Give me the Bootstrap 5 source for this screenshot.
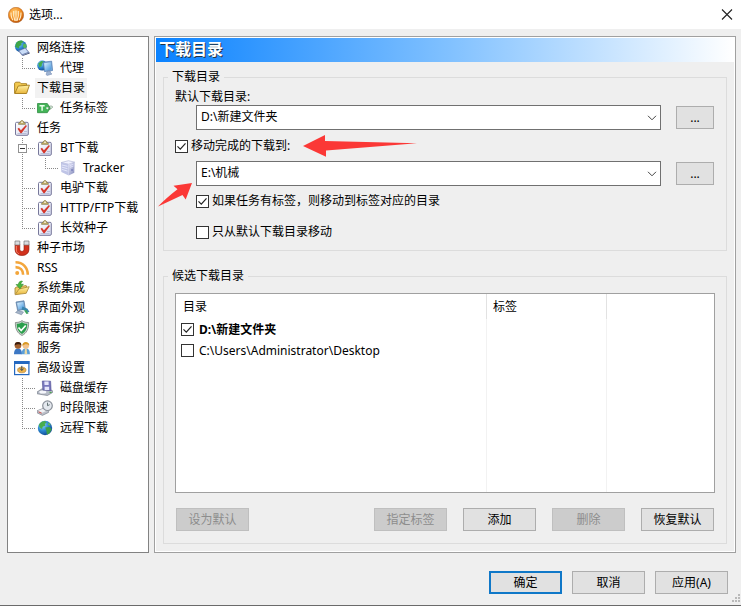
<!DOCTYPE html>
<html lang="zh-CN">
<head>
<meta charset="utf-8">
<meta name="viewport" content="width=device-width, initial-scale=1">
<title>选项...</title>
<link href="https://cdn.jsdelivr.net/npm/bootstrap@5.3.0/dist/css/bootstrap.min.css" rel="stylesheet">
<style>
  body {
    font: 12px/16px "Noto Sans", "Noto Sans CJK SC", sans-serif;
    color: #000;
    background: #efefef;
  }
  .dialog { border-bottom: 1px solid #6a6a6a; }
  .titlebar { height: 29px; padding: 0 8px; gap: 5px; }
  .titlebar h1 { font-size: 12px; line-height: 16px; font-weight: 400; }
  .close-btn { width: 12px; height: 12px; }
  .workspace { padding: 7px 5px 0 7px; gap: 5px; }

  /* Category tree */
  .sidebar { flex: 0 0 142px; border: 1px solid #828282; padding: 1px 0 0 6px; }
  .tree-row { height: 20px; }
  .tree-row svg.ico { width: 16px; height: 16px; }
  .tree-row a { color: #000; text-decoration: none; white-space: nowrap; margin-left: 5px; padding: 0 2px; line-height: 20px; }
  .tree-row a.current { background: #f2f2f2; }
  .rail, .tee, .elbow { flex: 0 0 23px; height: 20px; background-repeat: no-repeat; }
  .rail { background-image: repeating-linear-gradient(#888 0 1px, transparent 1px 2px); background-size: 1px 20px; background-position: 8px 0; }
  .tee, .elbow {
    background-image: repeating-linear-gradient(#888 0 1px, transparent 1px 2px), repeating-linear-gradient(90deg, #888 0 1px, transparent 1px 2px);
    background-position: 8px 0, 8px 10px;
  }
  .tee { background-size: 1px 20px, 13px 1px; }
  .elbow { background-size: 1px 11px, 13px 1px; }
  .toggler { width: 9px; height: 9px; margin-left: 4px; }

  /* Settings pane */
  .pane { min-width: 0; border: 1px solid #a0a0a0; outline: 1px solid #fff; outline-offset: -2px; padding: 1px; }
  .banner {
    font-size: 16px; line-height: 22px; font-weight: 700; color: #fff; padding: 0 3px 1px; height: 24px;
    background: linear-gradient(90deg, #0a82ff, #7fc0ff 50%, #fff);
    text-shadow: 1px 1px 0 #234;
  }
  .pane-body { padding: 7px 7px 7px; }
  .group { border: 1px solid #dcdcdc; padding: 0 11px 10px; }
  .group + .group { margin-top: 17px; padding-bottom: 12px; }
  .group legend { float: none; width: auto; margin: 0 0 0 -7px; padding: 0 4px; font-size: 12px; line-height: 16px; }
  .indent { padding-left: 21px; }
  .path-row { gap: 15px; padding-right: 1px; }
  .gap-above { margin-top: 7px; }
  .gap-above-lg { margin-top: 15px; }
  .path-select {
    height: 25px; padding: 0 24px 2px 4px; font-size: 12px; line-height: 20px; color: #000;
    border: 1px solid #707070; border-radius: 0; min-width: 0;
    background: #fff url("data:image/svg+xml,%3csvg xmlns='http://www.w3.org/2000/svg' viewBox='0 0 10 6'%3e%3cpath fill='none' stroke='%23444' d='M1 .8 5 4.8 9 .8'/%3e%3c/svg%3e") no-repeat right 3px center / 10px 6px;
  }
  .check { min-height: 0; padding: 0; margin-bottom: 0; gap: 3px; line-height: 16px; }
  .check .form-check-input {
    float: none; margin: 0; width: 13px; height: 13px; flex: none; border: 1px solid #333; border-radius: 0; background-color: #fff;
  }
  .check .form-check-input:checked {
    background-image: url("data:image/svg+xml,%3csvg xmlns='http://www.w3.org/2000/svg' viewBox='0 0 11 11'%3e%3cpath fill='none' stroke='%23222' stroke-width='1.2' d='m1.5 5.4 2.8 2.8 5.2-5.8'/%3e%3c/svg%3e");
  }
  .win-btn {
    width: 73px; height: 23px; padding: 0; font-size: 12px; line-height: 19px; border-radius: 0; flex: none;
    --bs-btn-color: #000; --bs-btn-bg: #e1e1e1; --bs-btn-border-color: #adadad;
    --bs-btn-hover-color: #000; --bs-btn-hover-bg: #e5f1fb; --bs-btn-hover-border-color: #0078d7;
    --bs-btn-disabled-color: #8d8d8d; --bs-btn-disabled-bg: #ccc; --bs-btn-disabled-border-color: #bfbfbf; --bs-btn-disabled-opacity: 1;
  }
  .win-btn.browse { width: 38px; }
  .win-btn.default { border: 2px solid #1078c8; line-height: 17px; }
  .tools { gap: 16px; margin-top: 15px; padding: 0 1px; }
  .listbox { margin-top: 9px; min-height: 200px; border: 1px solid #a0a0a0; }
  .dirs { table-layout: fixed; width: 100%; }
  .dirs th { font-weight: 400; height: 25px; padding: 0 6px; border-right: 1px solid #e2e2e2; }
  .dirs th:first-child { padding-left: 7px; }
  .dirs td { height: 21px; padding: 0 5px; border-right: 1px solid #f2f2f2; }
  .dirs th:last-child, .dirs td:last-child { border-right: 0; }
  .dirs .check { gap: 5px; }
  .dirs .filler td { height: auto; }
  .footer { padding: 18px 13px 11px; gap: 10px; }

  /* Red pointers laid over the settings */
  .pointer { position: absolute; pointer-events: none; }
  .pointer-a { left: 148px; top: 98px; }
  .pointer-b { left: 3px; top: 146px; }
  .grip { position: absolute; right: 0; bottom: 2px; }
</style>
</head>
<body>

<svg class="position-absolute" width="0" height="0" aria-hidden="true">
  <defs>
    <radialGradient id="gBall" cx=".4" cy=".3" r=".75"><stop offset="0" stop-color="#ffc46a"/><stop offset=".6" stop-color="#f08a1c"/><stop offset="1" stop-color="#b8500a"/></radialGradient>
    <radialGradient id="gGlobe" cx=".35" cy=".3" r=".8"><stop offset="0" stop-color="#8fd8ff"/><stop offset=".5" stop-color="#2a86d0"/><stop offset="1" stop-color="#0c3f86"/></radialGradient>
    <linearGradient id="gFold" x1="0" y1="0" x2="0" y2="1"><stop offset="0" stop-color="#fff3a8"/><stop offset="1" stop-color="#e9b53a"/></linearGradient>
    <linearGradient id="gScreen" x1="0" y1="0" x2="1" y2="1"><stop offset="0" stop-color="#dff3ff"/><stop offset="1" stop-color="#3f93dc"/></linearGradient>
    <linearGradient id="gPage" x1="0" y1="0" x2="1" y2="1"><stop offset="0" stop-color="#fff"/><stop offset="1" stop-color="#d3d8ee"/></linearGradient>
    <linearGradient id="gSrv" x1="0" y1="0" x2="1" y2="1"><stop offset="0" stop-color="#e6e8fa"/><stop offset="1" stop-color="#7f86b8"/></linearGradient>
  </defs>
  <symbol id="i-net" viewBox="0 0 16 16">
    <circle cx="6.8" cy="6.3" r="5.9" fill="url(#gGlobe)"/>
    <path d="M2 3.2C3.4 1 5.600.4 8 .6L9.500 2 7.200 3.400 7.600 5 5.400 6.200 4.800 8.600 2.800 7.400 1.200 7z" fill="#3fa648"/>
    <path d="M9.600 3.400l2.600.8.4 3-2 1.600-1.700-2z" fill="#55b85a"/>
    <path d="M4 10.800l7.500-3.100 4 4.700-7.500 3.200z" fill="#6c7fae"/>
    <path d="M5.300 10.900l5.900-2.300 2.800 3.400-5.800 2.300z" fill="#c9dcf7"/>
    <path d="M8.200 15.600l7.500-3.200v1L8.500 16z" fill="#38466e"/>
  </symbol>
  <symbol id="i-proxy" viewBox="0 0 16 16">
    <circle cx="5.200" cy="5.600" r="5" fill="url(#gGlobe)"/>
    <path d="M1.300 3.500L4.300.9l2.500.7L5 3.700l-.4 2.500-2.300 1z" fill="#45ad4e"/>
    <path d="M6 2.200l8.600-1 1 9.300-8.100 1.100z" fill="#7fa9d6" stroke="#4b78b0" stroke-width=".7"/>
    <path d="M7.200 3.300l6.500-.8.7 6.900-6.200.9z" fill="url(#gScreen)"/>
    <path d="M10 11.500l3.200-.4.400 2 1.400.9-4.800 1.500-1.200-1z" fill="#9fb4d3" stroke="#6a83ad" stroke-width=".5"/>
  </symbol>
  <symbol id="i-folder" viewBox="0 0 16 16">
    <path d="M.6 13.400V3.200l1-1h4.200l1.300 1.500h5.500v2.600" fill="#f2c94f" stroke="#a57c1a" stroke-width=".9"/>
    <path d="M.8 13.500L4.200 6l11.200-.9-2.800 8.400z" fill="url(#gFold)" stroke="#a57c1a" stroke-width=".9" stroke-linejoin="round"/>
  </symbol>
  <symbol id="i-tag" viewBox="0 0 16 16">
    <path d="M.5 3.500h9.800l3 4.500-3 4.700H.5z" fill="#43b457" stroke="#258238" stroke-width=".7"/>
    <path d="M2.500 5.700h5.200M5.100 5.700v5" stroke="#eaffea" stroke-width="1.500" fill="none"/>
    <circle cx="10.500" cy="8.100" r="1.200" fill="#fff"/>
    <path d="M10.500 8c2-2.500 4-2 5.200-1.400M10.800 8.400c2 1.400 3.200.8 4.800-1.400" fill="none" stroke="#57805e" stroke-width=".7"/>
  </symbol>
  <symbol id="i-task" viewBox="0 0 16 16">
    <rect x="1.500" y="2.300" width="12.800" height="13" rx="1.200" fill="url(#gPage)" stroke="#77779a"/>
    <path d="M4.500 4.300c0-1.500 1-1.700 1.700-2C6.500 0 9.400 0 9.700 2.300c.8.300 1.700.5 1.700 2z" fill="#c8b46c" stroke="#7f7340" stroke-width=".7"/>
    <circle cx="8" cy="2.200" r=".8" fill="#fff"/>
    <path d="M3.500 8.700l1.500-1 1.900 2.600 5-5.200 1 .9-5.900 8z" fill="#d5382c"/>
    <path d="M3.500 13.500h9M10 11.500h3" stroke="#a9afcf" stroke-width=".7"/>
  </symbol>
  <symbol id="i-server" viewBox="0 0 16 16">
    <path d="M1 2.600L8.400.7l6.200 1.400-5.900 2.100z" fill="#f1f2ff" stroke="#9aa0c8" stroke-width=".5"/>
    <path d="M1 2.600l7.700 1.600v11.300L1.300 12z" fill="#bfc4e6"/>
    <path d="M8.700 4.200l5.900-2.100-.3 10.700-5.600 2.700z" fill="url(#gSrv)"/>
    <path d="M2 5l5.500 1.300M2 7.200l5.500 1.500M2 9.400l5.500 1.700" stroke="#eef0ff" stroke-width=".8"/>
    <path d="M10 5.500l3.500-1.300M10 7.300L13.500 6" stroke="#e8eaff" stroke-width=".8"/>
    <circle cx="12" cy="10" r=".8" fill="#5961a8"/>
  </symbol>
  <symbol id="i-magnet" viewBox="0 0 16 16">
    <path d="M1 4.500h4.800v4.800c0 2.700 4.200 2.700 4.200 0V4.500h5v5c0 8-14 8-14 0z" fill="#d2321d" stroke="#8e1a0c" stroke-width=".6"/>
    <path d="M1 1h4.800v4H1zM10 1h5v4h-5z" fill="#d9dce0" stroke="#777" stroke-width=".7"/>
    <path d="M2.300 6v4c0 1.800 1 3 2.500 3.800" stroke="#f58b72" fill="none"/>
  </symbol>
  <symbol id="i-rss" viewBox="0 0 16 16">
    <g fill="none" stroke="#f3a63c" stroke-width="2.600"><path d="M1.500 2.300C9 2.300 13.800 7.500 13.800 14.800"/><path d="M1.500 7.100c4.700 0 7.600 3.200 7.600 7.700"/></g>
    <circle cx="3.200" cy="13" r="2" fill="#f3a63c"/>
  </symbol>
  <symbol id="i-integrate" viewBox="0 0 16 16">
    <path d="M1 14.300V8l2-1.200 2.500.6 1-1 5.700-.8.600 1.800" fill="#eecb68" stroke="#9d7e2d" stroke-width=".8"/>
    <path d="M1.200 14.700L5 9l10.200-2.300-3 6.600z" fill="url(#gFold)" stroke="#a78735" stroke-width=".8" stroke-linejoin="round"/>
    <path d="M7.500 1C5 1.500 4.300 3 4.400 4.600L2 4.500l4 4.300 3.400-4.700-2.400.4C7 3.200 7.200 2 8.600 1.400z" fill="#4ab83f" stroke="#248022" stroke-width=".5"/>
  </symbol>
  <symbol id="i-skin" viewBox="0 0 16 16">
    <path d="M2 2l8-1.200 1.400 8.400-7.800 1.400z" fill="#7fa6cc" stroke="#50749d" stroke-width=".7"/>
    <path d="M3.200 3l6-.9 1 6.200-5.800 1z" fill="url(#gScreen)"/>
    <path d="M1.500 12.500l2.500-2 5.500 1.500-2 2.800z" fill="#a5b4c8" stroke="#687c99" stroke-width=".5"/>
    <path d="M8.500 6.500l5 2.300 2 3.200-1.500.2-3-1.700-3.500-.8z" fill="#3984ad"/>
    <path d="M10 10.500l2.500 3.500 2-.5-2-3.500z" fill="#3fa35d"/>
  </symbol>
  <symbol id="i-shield" viewBox="0 0 16 16">
    <path d="M8 .6c2 1.500 4.200 1.900 6.600 1.900C14.900 9 12.600 13.200 8 15.500 3.400 13.200 1.100 9 1.400 2.500 3.800 2.500 6 2.100 8 .6z" fill="#c9d2cc" stroke="#68756e" stroke-width=".7"/>
    <path d="M8 2.200c1.700 1.100 3.300 1.500 5.300 1.600C13.300 8.800 11.500 12 8 14 4.500 12 2.700 8.800 2.700 3.800 4.700 3.700 6.300 3.300 8 2.200z" fill="#2b9f4c"/>
    <path d="M4.500 7.500l2.700 3 4.500-5" stroke="#fff" stroke-width="1.700" fill="none"/>
  </symbol>
  <symbol id="i-users" viewBox="0 0 16 16">
    <path d="M0 14.300c0-4 1.300-5.800 4-5.800s4 1.800 4 5.800z" fill="#3d78c4"/>
    <circle cx="4" cy="5.400" r="3.300" fill="#a4602e"/><path d="M.7 5.500C.3 1 7.600 1 7.300 5.200 5.800 4 3 4 .7 5.500z" fill="#3b1d0e"/>
    <path d="M7.600 14.300c0-4 1.300-5.800 4.200-5.800s4.100 1.800 4.100 5.800z" fill="#5b9fd8"/>
    <path d="M11 9h1.700l.5 5h-2.700z" fill="#e9d9a5"/>
    <circle cx="11.800" cy="5.600" r="3.200" fill="#f2c28c"/><path d="M8.400 5.800c-.7-5 7.200-5 6.900-.3C13.400 3.600 10.500 4 8.400 5.800z" fill="#d99a26"/>
  </symbol>
  <symbol id="i-adv" viewBox="0 0 16 16">
    <rect x=".6" y="1.600" width="14.300" height="13" fill="#fff" stroke="#2468c0" stroke-width="1.200"/>
    <path d="M0 1h15.500v3H0z" fill="#2468c0"/>
    <ellipse cx="7.800" cy="10" rx="4.200" ry="2.800" fill="#efb44b" stroke="#ab782d" stroke-width=".6"/>
    <path d="M7.800 5.800v4.500M6 8.500l1.800 2 1.900-2" stroke="#3e4a53" fill="none"/>
  </symbol>
  <symbol id="i-disk" viewBox="0 0 16 16">
    <path d="M0 12l5-3.200 10.300 1.700.3 2-5.200 3L.2 13.800z" fill="#b5bbc6" stroke="#69707e" stroke-width=".6"/>
    <ellipse cx="5.800" cy="12" rx="3.500" ry="1.500" fill="#f5f6fb"/>
    <path d="M5.300 1l8.300.2.500 9.300-8.200-.4z" fill="#7877bd" stroke="#4e4b8e" stroke-width=".6"/>
    <path d="M7.300 1.400l4.300.1.100 3.500H7.500zM7.600 6.700l4.500.1.100 3.300-4.500-.2z" fill="#e5e5fa"/>
    <path d="M12.500 12.200l2 .3" stroke="#3da83d" stroke-width="1"/>
  </symbol>
  <symbol id="i-clock" viewBox="0 0 16 16">
    <path d="M0 10.800l6.400-2.500 5.200 2.300v1.800l-6.200 3L0 12.800z" fill="#bcc0c9" stroke="#757b86" stroke-width=".6"/>
    <path d="M1 10.700l5.300-2 4 1.900-5 2.200z" fill="#f1f2f5"/>
    <path d="M1.600 11.900l3 1.300" stroke="#d75249"/>
    <circle cx="10.500" cy="5.700" r="4.800" fill="#e4e8ee" stroke="#8a9099" stroke-width="1.200"/>
    <path d="M10.500 2.700v3l2.200-1" stroke="#566" stroke-width=".9" fill="none"/>
  </symbol>
  <symbol id="i-globe" viewBox="0 0 16 16">
    <circle cx="8" cy="8" r="7.200" fill="url(#gGlobe)"/>
    <path d="M2 4.500C3.500 2 5.800 1 8 1l1.800 1.500-2 1.200.5 2-2.600 1-.7 2.600L2.300 7z" fill="#48ad4d"/>
    <path d="M8.300 7.500l4-.6 2.300 2-2 4.300-2.600 1.500-.6-3.600z" fill="#3c9f49"/>
    <path d="M11.500 2.600l2 1.600-.5 1.500-2-.9z" fill="#62bd58"/>
  </symbol>
</svg>

<main class="dialog d-flex flex-column min-vh-100 position-relative">
  <header class="titlebar d-flex align-items-center bg-white">
    <svg width="16" height="16" viewBox="0 0 16 16" aria-hidden="true">
      <circle cx="8" cy="8" r="7.700" fill="url(#gBall)" stroke="#a85c20" stroke-width=".5"/>
      <path d="M3 5.500c0 4 .5 6 2 7.500M5.700 4c-.4 4 0 7 1.200 9.700M8 3.500v10.500M10.300 4c.4 4 0 7-1.200 9.700M13 5.500c0 4-.5 6-2 7.500" fill="none" stroke="#fff0cc" stroke-width="1.100"/>
    </svg>
    <h1 class="m-0 me-auto">选项...</h1>
    <button type="button" class="close-btn btn p-0 border-0 d-flex" aria-label="关闭">
      <svg width="12" height="12" viewBox="0 0 12 12"><path d="M1 .5l10 10M11 .5l-10 10" stroke="#222" stroke-width="1.100"/></svg>
    </button>
  </header>

  <div class="workspace d-flex flex-grow-1">
    <nav class="sidebar bg-white" aria-label="选项分类">
      <ul class="list-unstyled m-0">
        <li><div class="tree-row d-flex align-items-center"><svg class="ico"><use href="#i-net"/></svg><a href="#">网络连接</a></div>
          <ul class="list-unstyled">
            <li class="tree-row d-flex align-items-center"><span class="elbow"></span><svg class="ico"><use href="#i-proxy"/></svg><a href="#">代理</a></li>
          </ul>
        </li>
        <li><div class="tree-row d-flex align-items-center"><svg class="ico"><use href="#i-folder"/></svg><a href="#" class="current" aria-current="page">下载目录</a></div>
          <ul class="list-unstyled">
            <li class="tree-row d-flex align-items-center"><span class="elbow"></span><svg class="ico"><use href="#i-tag"/></svg><a href="#">任务标签</a></li>
          </ul>
        </li>
        <li><div class="tree-row d-flex align-items-center"><svg class="ico"><use href="#i-task"/></svg><a href="#">任务</a></div>
          <ul class="list-unstyled">
            <li><div class="tree-row d-flex align-items-center"><span class="tee d-flex align-items-center"><button type="button" class="toggler btn p-0 border-0 rounded-0 d-flex" aria-label="折叠 BT下载"><svg width="9" height="9"><rect x=".5" y=".5" width="8" height="8" fill="#fff" stroke="#919191"/><path d="M2 4.500h5" stroke="#333"/></svg></button></span><svg class="ico"><use href="#i-task"/></svg><a href="#">BT下载</a></div>
              <ul class="list-unstyled">
                <li class="tree-row d-flex align-items-center"><span class="rail"></span><span class="elbow"></span><svg class="ico"><use href="#i-server"/></svg><a href="#">Tracker</a></li>
              </ul>
            </li>
            <li class="tree-row d-flex align-items-center"><span class="tee"></span><svg class="ico"><use href="#i-task"/></svg><a href="#">电驴下载</a></li>
            <li class="tree-row d-flex align-items-center"><span class="tee"></span><svg class="ico"><use href="#i-task"/></svg><a href="#">HTTP/FTP下载</a></li>
            <li class="tree-row d-flex align-items-center"><span class="elbow"></span><svg class="ico"><use href="#i-task"/></svg><a href="#">长效种子</a></li>
          </ul>
        </li>
        <li class="tree-row d-flex align-items-center"><svg class="ico"><use href="#i-magnet"/></svg><a href="#">种子市场</a></li>
        <li class="tree-row d-flex align-items-center"><svg class="ico"><use href="#i-rss"/></svg><a href="#">RSS</a></li>
        <li class="tree-row d-flex align-items-center"><svg class="ico"><use href="#i-integrate"/></svg><a href="#">系统集成</a></li>
        <li class="tree-row d-flex align-items-center"><svg class="ico"><use href="#i-skin"/></svg><a href="#">界面外观</a></li>
        <li class="tree-row d-flex align-items-center"><svg class="ico"><use href="#i-shield"/></svg><a href="#">病毒保护</a></li>
        <li class="tree-row d-flex align-items-center"><svg class="ico"><use href="#i-users"/></svg><a href="#">服务</a></li>
        <li><div class="tree-row d-flex align-items-center"><svg class="ico"><use href="#i-adv"/></svg><a href="#">高级设置</a></div>
          <ul class="list-unstyled">
            <li class="tree-row d-flex align-items-center"><span class="tee"></span><svg class="ico"><use href="#i-disk"/></svg><a href="#">磁盘缓存</a></li>
            <li class="tree-row d-flex align-items-center"><span class="tee"></span><svg class="ico"><use href="#i-clock"/></svg><a href="#">时段限速</a></li>
            <li class="tree-row d-flex align-items-center"><span class="elbow"></span><svg class="ico"><use href="#i-globe"/></svg><a href="#">远程下载</a></li>
          </ul>
        </li>
      </ul>
    </nav>

    <section class="pane flex-grow-1 d-flex flex-column position-relative">
      <h2 class="banner m-0">下载目录</h2>
      <div class="pane-body d-flex flex-column flex-grow-1">
        <fieldset class="group">
          <legend>下载目录</legend>
          <label for="defaultDir" class="d-block mt-1">默认下载目录:</label>
          <div class="path-row indent d-flex align-items-center">
            <select id="defaultDir" class="path-select form-select flex-grow-1"><option>D:\新建文件夹</option></select>
            <button type="button" class="win-btn browse btn" aria-label="浏览默认下载目录">...</button>
          </div>
          <div class="check form-check d-flex align-items-center mt-2">
            <input class="form-check-input" type="checkbox" id="moveDone" checked>
            <label for="moveDone">移动完成的下载到:</label>
          </div>
          <div class="path-row indent d-flex align-items-center gap-above">
            <select id="doneDir" class="path-select form-select flex-grow-1" aria-label="移动到目录"><option>E:\机械</option></select>
            <button type="button" class="win-btn browse btn" aria-label="浏览移动目录">...</button>
          </div>
          <div class="indent gap-above">
            <div class="check form-check d-flex align-items-center">
              <input class="form-check-input" type="checkbox" id="byTag" checked>
              <label for="byTag">如果任务有标签，则移动到标签对应的目录</label>
            </div>
            <div class="check form-check d-flex align-items-center gap-above-lg">
              <input class="form-check-input" type="checkbox" id="onlyDefault">
              <label for="onlyDefault">只从默认下载目录移动</label>
            </div>
          </div>
        </fieldset>

        <fieldset class="group">
          <legend>候选下载目录</legend>
          <div class="listbox bg-white d-flex">
            <table class="dirs">
              <colgroup><col><col width="120"><col width="20%"></colgroup>
              <thead><tr><th scope="col">目录</th><th scope="col">标签</th><th></th></tr></thead>
              <tbody>
                <tr><td><div class="check form-check d-flex align-items-center"><input class="form-check-input" type="checkbox" id="dirD" checked><label for="dirD" class="fw-bold">D:\新建文件夹</label></div></td><td></td><td></td></tr>
                <tr><td><div class="check form-check d-flex align-items-center"><input class="form-check-input" type="checkbox" id="dirC"><label for="dirC">C:\Users\Administrator\Desktop</label></div></td><td></td><td></td></tr>
                <tr class="filler"><td></td><td></td><td></td></tr>
              </tbody>
            </table>
          </div>
          <div class="tools d-flex">
            <button type="button" class="win-btn btn me-auto" disabled>设为默认</button>
            <button type="button" class="win-btn btn" disabled>指定标签</button>
            <button type="button" class="win-btn btn">添加</button>
            <button type="button" class="win-btn btn" disabled>删除</button>
            <button type="button" class="win-btn btn">恢复默认</button>
          </div>
        </fieldset>
      </div>

      <svg class="pointer pointer-a" width="116" height="24" viewBox="0 0 116 24" aria-hidden="true"><path d="M0 11L22 0v6L114 8.300 23 15.500v6.200z" fill="#fb3836"/></svg>
      <svg class="pointer pointer-b" width="36" height="26" viewBox="0 0 36 26" aria-hidden="true"><path d="M34 0L15.500 2.700l4 3.500C12 12 6 17 0 23.500L24.500 12l3.200 4.500z" fill="#fb3836"/></svg>
    </section>
  </div>

  <footer class="footer d-flex justify-content-end">
    <button type="button" class="win-btn btn default">确定</button>
    <button type="button" class="win-btn btn">取消</button>
    <button type="button" class="win-btn btn">应用(A)</button>
  </footer>
  <svg class="grip" width="9" height="9" viewBox="0 0 9 9" aria-hidden="true"><path d="M6 0h2v2H6zM3 3h2v2H3zM6 3h2v2H6zM0 6h2v2H0zM3 6h2v2H3zM6 6h2v2H6z" fill="#b9b9b9"/></svg>
</main>

<script src="https://cdn.jsdelivr.net/npm/bootstrap@5.3.0/dist/js/bootstrap.bundle.min.js"></script>
</body>
</html>
